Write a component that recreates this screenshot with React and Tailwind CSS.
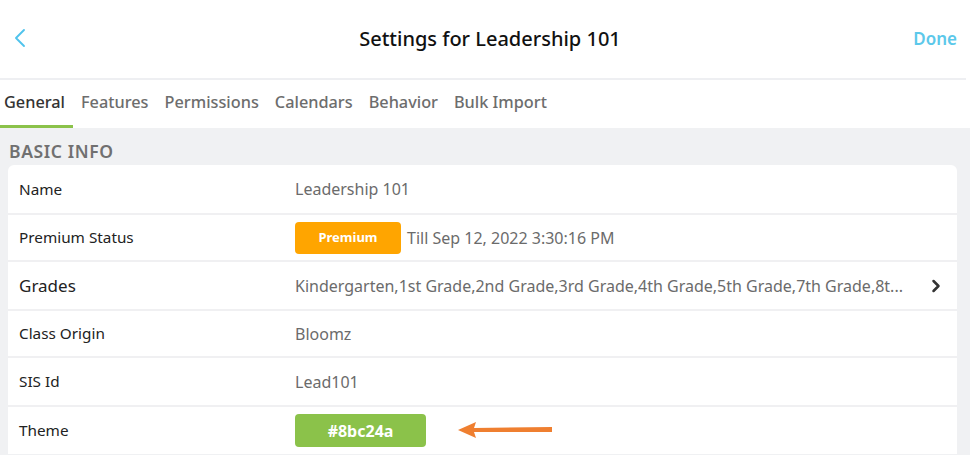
import { ChevronLeft, ChevronRight } from 'lucide-react';

const font = { fontFamily: '"Noto Sans", "Liberation Sans", sans-serif' };

function Row({ label, big, h, children, last }) {
  return (
    <div className={`flex items-center ${h} ${last ? '' : 'border-b-2 border-[#f0f0f2]'}`}>
      <div className={`w-[287px] pl-[11px] text-[#222] ${big ? 'text-[17px]' : 'text-[15.3px]'}`}>{label}</div>
      <div className="flex-1 min-w-0 flex items-center text-[16px] text-[#6b6b6b]">{children}</div>
    </div>
  );
}

export default function App() {
  const tabs = ['General', 'Features', 'Permissions', 'Calendars', 'Behavior', 'Bulk Import'];
  return (
    <div className="w-[970px] h-[455px] overflow-hidden bg-white" style={font}>
      {/* header */}
      <div className="h-[80px] grid grid-cols-[1fr_auto_1fr] items-center border-b-2 border-[#eeeff2] mr-[4px]">
        <div className="pl-[4px] pb-[2px]">
          <ChevronLeft size={32} strokeWidth={1.4} className="text-[#4fc3ec]" />
        </div>
        <div className="text-[20px] font-medium text-[#111] pl-[14px]">Settings for Leadership 101</div>
        <div className="flex justify-end pr-[9px] text-[17px] font-semibold text-[#5cc8ea]">Done</div>
      </div>

      {/* tabs */}
      <div className="h-[48px] flex items-stretch">
        {tabs.map((t, i) => (
          <div
            key={t}
            className={`flex items-center text-[16.3px] font-medium ${i === 0 ? 'pl-[4px] pr-[8px] text-[#333] border-b-[3px] border-[#8bc24a]' : 'px-[8px] text-[#6d6d6d] border-b-[3px] border-transparent'}`}
          >
            {t}
          </div>
        ))}
      </div>

      {/* body */}
      <div className="bg-[#f0f1f3] h-full pl-[8px] pr-[13px]">
        <div className="h-[37px] flex items-center pl-[1px] pt-[9px] text-[17.5px] font-semibold text-[#707070] tracking-[0.6px]">BASIC INFO</div>
        <div className="bg-white rounded-t-[6px]">
          <Row label="Name" h="h-[50px]">Leadership 101</Row>
          <Row label="Premium Status" h="h-[47px]">
            <span className="w-[106px] h-[32px] rounded-[4px] bg-[#ffa500] text-white text-[13px] font-bold flex items-center justify-center">Premium</span>
            <span className="ml-[6px]">Till Sep 12, 2022 3:30:16 PM</span>
          </Row>
          <Row label="Grades" big h="h-[49px]">
            <span className="whitespace-nowrap">Kindergarten,1st Grade,2nd Grade,3rd Grade,4th Grade,5th Grade,7th Grade,8t...</span>
            <span className="flex-1" />
            <ChevronRight size={20} strokeWidth={3} className="text-[#333] shrink-0 ml-[2px] mr-[11px]" />
          </Row>
          <Row label="Class Origin" h="h-[47px]">Bloomz</Row>
          <Row label="SIS Id" h="h-[49px]">Lead101</Row>
          <Row label="Theme" h="h-[47px]" last>
            <span className="w-[131px] h-[33px] rounded-[4px] bg-[#8bc24a] text-white text-[16px] font-bold flex items-center justify-center">#8bc24a</span>
            <svg width="100" height="20" viewBox="0 0 100 20" className="ml-[31px]">
              <path d="M1 9 L19 1 L17 7 L95 6 L95 11 L17 11 L19 17 Z" fill="#ef7f30" />
            </svg>
          </Row>
        </div>
      </div>
    </div>
  );
}
